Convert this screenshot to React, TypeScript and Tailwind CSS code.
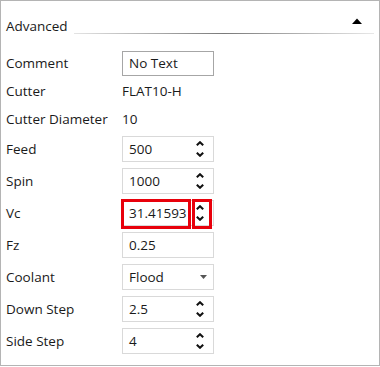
import React from "react";

const font = { fontFamily: '"Open Sans", "Noto Sans", sans-serif' };

function Spinner() {
  return (
    <div className="flex flex-col items-center justify-between h-[16px] w-[8px]">
      <svg width="8" height="5" viewBox="0 0 8 5"><path d="M0.8 4.3 L4 1.2 L7.2 4.3" fill="none" stroke="#111" strokeWidth="2" /></svg>
      <svg width="8" height="5" viewBox="0 0 8 5"><path d="M0.8 0.7 L4 3.8 L7.2 0.7" fill="none" stroke="#111" strokeWidth="2" /></svg>
    </div>
  );
}

function Label({ children }: { children: React.ReactNode }) {
  return <div className="w-[121px] shrink-0 pl-[5px]">{children}</div>;
}

function NumRow({ label, value }: { label: string; value: string }) {
  return (
    <div className="flex items-center h-[32px]">
      <Label>{label}</Label>
      <div className="flex items-center w-[92px] h-[26px] border border-[#d9d9d9] pl-[6px] pr-[9px]">
        <span className="flex-1">{value}</span>
        <Spinner />
      </div>
    </div>
  );
}

export default function App() {
  return (
    <div className="w-[380px] h-[367px] bg-white" style={font}>
      <div className="w-[380px] h-[366px] border border-[#b4b4b4] text-[13.5px] text-[#1a1a1a]">
        <div className="relative flex items-center h-[48px] pl-[5px]">
          <span className="leading-[18px] mt-[1px]">Advanced</span>
          <div className="absolute left-[73px] right-[5px] top-[32px] h-[1px] bg-[linear-gradient(to_right,#e4e4e4,#7a7a7a_50%,#e8e8e8)]" />
          <svg className="absolute left-[351px] top-[17px]" width="10" height="6" viewBox="0 0 10 6"><path d="M0 6 L5 0.5 L10 6 Z" fill="#000" /></svg>
        </div>
        <div className="flex flex-col">
          <div className="flex items-center h-[28px]">
            <Label>Comment</Label>
            <div className="flex items-center w-[92px] h-[25px] border border-[#a6a6a6] pl-[6px]">No Text</div>
          </div>
          <div className="flex items-center h-[28px]">
            <Label>Cutter</Label>
            <span>FLAT10-H</span>
          </div>
          <div className="flex items-center h-[28px]">
            <Label>Cutter Diameter</Label>
            <span>10</span>
          </div>
          <NumRow label="Feed" value="500" />
          <NumRow label="Spin" value="1000" />
          <div className="flex items-center h-[32px]">
            <Label>Vc</Label>
            <div className="relative flex items-center w-[92px] h-[26px] border border-[#d9d9d9] pl-[6px] pr-[9px]">
              <span className="flex-1">31.41593</span>
              <Spinner />
              <div className="absolute left-[-2px] top-[-2px] w-[70px] h-[30px] border-[3px] border-[#e8000b]" />
              <div className="absolute left-[69px] top-[-2px] w-[20px] h-[30px] border-[3px] border-[#e8000b]" />
            </div>
          </div>
          <div className="flex items-center h-[32px]">
            <Label>Fz</Label>
            <div className="flex items-center w-[92px] h-[26px] border border-[#d9d9d9] pl-[6px]">0.25</div>
          </div>
          <div className="flex items-center h-[32px]">
            <Label>Coolant</Label>
            <div className="flex items-center w-[92px] h-[26px] border border-[#d9d9d9] pl-[6px] pr-[6px]">
              <span className="flex-1">Flood</span>
              <svg width="7" height="4" viewBox="0 0 7 4"><path d="M0 0 L7 0 L3.5 4 Z" fill="#555" /></svg>
            </div>
          </div>
          <NumRow label="Down Step" value="2.5" />
          <NumRow label="Side Step" value="4" />
        </div>
      </div>
    </div>
  );
}
